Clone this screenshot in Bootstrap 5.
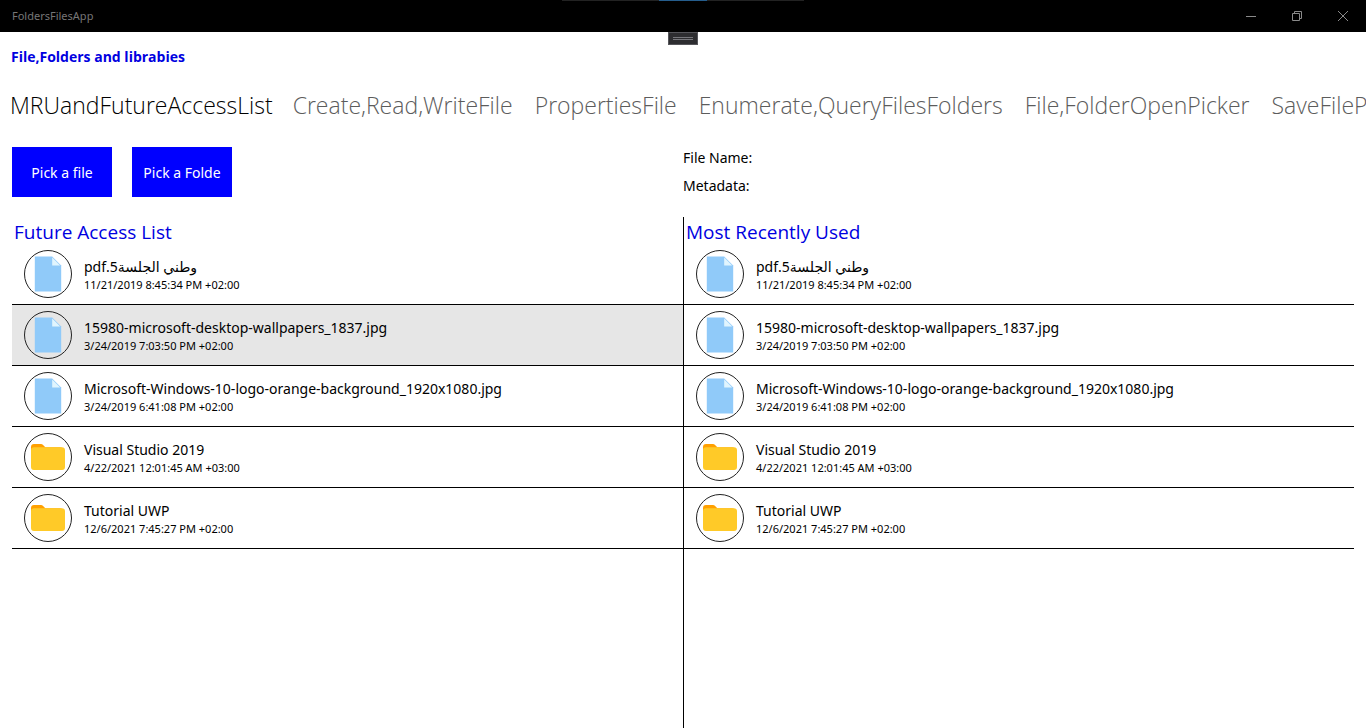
<!DOCTYPE html>
<html lang="en">
<head>
<meta charset="utf-8">
<meta name="viewport" content="width=device-width, initial-scale=1">
<title>FoldersFilesApp</title>
<link href="https://cdn.jsdelivr.net/npm/bootstrap@5.3.0/dist/css/bootstrap.min.css" rel="stylesheet">
<style>
body{font-family:"Noto Sans","Open Sans","DejaVu Sans",sans-serif;font-size:14px;line-height:20px;color:#000;background:#fff}
.titlebar{height:32px;background:#000;color:#767676;font-size:11px}
.caption-btn{width:46px;height:32px;color:#8a8a8a;background:none;border:0;padding:0 0 2px}
.top-edge{width:242px;height:1px;background:linear-gradient(90deg,#222 40%,#255d8c 40% 60%,#222 60%)}
.grip{top:32px;width:30px;height:13px;background:#2d2d30;border:1px solid #55555a;padding:0}
.app-title{color:#0000e0;font-family:"Open Sans",sans-serif;font-size:14px;line-height:20px;padding:15px 11px 0;margin:0}
.pivot{padding-top:20px}
.pivot .nav-link{color:#5c5c5c;font-family:"Open Sans",sans-serif;font-size:23px;font-weight:300;line-height:36px;padding:0 11px;white-space:nowrap}
.pivot .nav-link.active{color:#000}
.pivot .nav-item:first-child .nav-link{padding:0 9px 0 10px}
.actions{padding-top:21px;padding-bottom:17px}
.pick{width:100px;height:50px;background:#00f;color:#fff;border:0;border-radius:0;font-size:14px;padding:0;white-space:nowrap}
.pick:hover{background:#0000d6;color:#fff}
.pick-group{gap:20px}
.facts{line-height:28px}
.pane-title{color:#0000e0;font-family:"Open Sans",sans-serif;font-size:19px;line-height:30px;padding-left:2px;margin:0;height:27px}
.divider{border-left:1px solid #000}
.entry{padding:6px 12px;border-bottom:1px solid #000;color:#000;text-decoration:none}
.entry.selected{background:#e6e6e6}
.entry svg{width:48px;height:48px}
.entry-text{padding:2px 0 0 12px}
.entry-name{font-size:14px;line-height:20px}
.entry-date{font-size:11px;line-height:16px}
</style>
</head>
<body class="d-flex flex-column vh-100 overflow-hidden">
<svg class="d-none" aria-hidden="true">
  <symbol id="file" viewBox="0 0 48 48"><circle cx="24" cy="24" r="23.5" fill="none" stroke="#222"/><path d="M10.800 6.500h17.400l9 9V41.500H10.800z" fill="#90caf9"/><path d="M28.200 7.500v8h8z" fill="#e1f5fe"/></symbol>
  <symbol id="folder" viewBox="0 0 48 48"><circle cx="24" cy="24" r="23.500" fill="none" stroke="#222"/><path d="M21.300 14.200l-2.200-2.300a3 3 0 0 0-2.200-.9H10a3 3 0 0 0-3 3v7h32v-3.800a3 3 0 0 0-3-3z" fill="#ffa000"/><path d="M10 14.200h28a3 3 0 0 1 3 3V34a3 3 0 0 1-3 3H10a3 3 0 0 1-3-3V17.200a3 3 0 0 1 3-3z" fill="#ffca28"/></symbol>
</svg>
<header class="titlebar d-flex align-items-center justify-content-between flex-shrink-0 position-relative">
  <span class="ps-2 ms-1">FoldersFilesApp</span>
  <span class="top-edge position-absolute top-0 start-50 translate-middle-x"></span>
  <button class="grip position-absolute start-50 translate-middle-x d-flex align-items-center justify-content-center" type="button" aria-label="Show toolbar"><svg width="20" height="3" shape-rendering="crispEdges"><path d="M0 .5h20M0 2.500h20" stroke="#77777c"/></svg></button>
  <div class="d-flex">
    <button class="caption-btn" type="button" aria-label="Minimize"><svg width="12" height="12" fill="none" stroke="currentColor"><path d="M1 6.500h10"/></svg></button>
    <button class="caption-btn" type="button" aria-label="Restore"><svg width="12" height="12" fill="none" stroke="currentColor"><path d="M1.500 3.500h7v7h-7zM3.500 3.500v-2h7v7h-2"/></svg></button>
    <button class="caption-btn" type="button" aria-label="Close"><svg width="12" height="12" fill="none" stroke="currentColor"><path d="M1 1l10 10M11 1L1 11"/></svg></button>
  </div>
</header>
<h1 class="app-title fw-bold">File,Folders and librabies</h1>
<nav class="pivot overflow-hidden flex-shrink-0">
  <ul class="nav flex-nowrap">
    <li class="nav-item"><a class="nav-link active" href="#">MRUandFutureAccessList</a></li>
    <li class="nav-item"><a class="nav-link" href="#">Create,Read,WriteFile</a></li>
    <li class="nav-item"><a class="nav-link" href="#">PropertiesFile</a></li>
    <li class="nav-item"><a class="nav-link" href="#">Enumerate,QueryFilesFolders</a></li>
    <li class="nav-item"><a class="nav-link" href="#">File,FolderOpenPicker</a></li>
    <li class="nav-item"><a class="nav-link" href="#">SaveFileP</a></li>
  </ul>
</nav>
<main class="container-fluid d-flex flex-column flex-grow-1">
  <div class="row g-0 actions align-items-center">
    <div class="col-6 d-flex pick-group">
      <button class="btn pick" type="button">Pick a file</button>
      <button class="btn pick" type="button">Pick a Folde</button>
    </div>
    <div class="col-6 facts"><div>File Name:</div><div>Metadata:</div></div>
  </div>
  <div class="row g-0 flex-grow-1">
    <section class="col-6">
      <h2 class="pane-title">Future Access List</h2>
      <a class="entry d-flex align-items-center" href="#"><svg><use href="#file"/></svg><span class="entry-text d-flex flex-column align-items-start"><bdi class="entry-name" dir="rtl">وطني الجلسة5.pdf</bdi><span class="entry-date">11/21/2019 8:45:34 PM +02:00</span></span></a>
      <a class="entry selected d-flex align-items-center" href="#"><svg><use href="#file"/></svg><span class="entry-text d-flex flex-column"><span class="entry-name">15980-microsoft-desktop-wallpapers_1837.jpg</span><span class="entry-date">3/24/2019 7:03:50 PM +02:00</span></span></a>
      <a class="entry d-flex align-items-center" href="#"><svg><use href="#file"/></svg><span class="entry-text d-flex flex-column"><span class="entry-name">Microsoft-Windows-10-logo-orange-background_1920x1080.jpg</span><span class="entry-date">3/24/2019 6:41:08 PM +02:00</span></span></a>
      <a class="entry d-flex align-items-center" href="#"><svg><use href="#folder"/></svg><span class="entry-text d-flex flex-column"><span class="entry-name">Visual Studio 2019</span><span class="entry-date">4/22/2021 12:01:45 AM +03:00</span></span></a>
      <a class="entry d-flex align-items-center" href="#"><svg><use href="#folder"/></svg><span class="entry-text d-flex flex-column"><span class="entry-name">Tutorial UWP</span><span class="entry-date">12/6/2021 7:45:27 PM +02:00</span></span></a>
    </section>
    <section class="col-6 divider">
      <h2 class="pane-title">Most Recently Used</h2>
      <a class="entry d-flex align-items-center" href="#"><svg><use href="#file"/></svg><span class="entry-text d-flex flex-column align-items-start"><bdi class="entry-name" dir="rtl">وطني الجلسة5.pdf</bdi><span class="entry-date">11/21/2019 8:45:34 PM +02:00</span></span></a>
      <a class="entry d-flex align-items-center" href="#"><svg><use href="#file"/></svg><span class="entry-text d-flex flex-column"><span class="entry-name">15980-microsoft-desktop-wallpapers_1837.jpg</span><span class="entry-date">3/24/2019 7:03:50 PM +02:00</span></span></a>
      <a class="entry d-flex align-items-center" href="#"><svg><use href="#file"/></svg><span class="entry-text d-flex flex-column"><span class="entry-name">Microsoft-Windows-10-logo-orange-background_1920x1080.jpg</span><span class="entry-date">3/24/2019 6:41:08 PM +02:00</span></span></a>
      <a class="entry d-flex align-items-center" href="#"><svg><use href="#folder"/></svg><span class="entry-text d-flex flex-column"><span class="entry-name">Visual Studio 2019</span><span class="entry-date">4/22/2021 12:01:45 AM +03:00</span></span></a>
      <a class="entry d-flex align-items-center" href="#"><svg><use href="#folder"/></svg><span class="entry-text d-flex flex-column"><span class="entry-name">Tutorial UWP</span><span class="entry-date">12/6/2021 7:45:27 PM +02:00</span></span></a>
    </section>
  </div>
</main>
<script src="https://cdn.jsdelivr.net/npm/bootstrap@5.3.0/dist/js/bootstrap.bundle.min.js"></script>
</body>
</html>
